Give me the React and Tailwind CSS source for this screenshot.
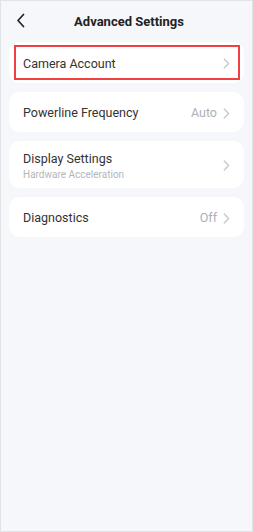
import React from "react";

const Chevron = () => (
  <svg width="7" height="11" viewBox="0 0 7 11" fill="none" className="shrink-0">
    <path d="M1.2 1 L5.6 5.5 L1.2 10" stroke="#c4c6ca" strokeWidth="1.2" strokeLinecap="round" strokeLinejoin="round" />
  </svg>
);

function Row({ title, sub, value, h, highlight }) {
  return (
    <div className={`relative flex items-center bg-white rounded-[11px] pl-[14px] pr-[14px] pt-[2px] ${h}`}>
      <div className="flex-1 flex flex-col">
        <span className="text-[12.5px] leading-[16px] text-[#333333]">{title}</span>
        {sub && <span className="text-[10px] leading-[13px] mt-[1px] text-[#b4b6ba]">{sub}</span>}
      </div>
      {value && <span className="text-[12.5px] text-[#aeb0b4] mr-[6px]">{value}</span>}
      <Chevron />
      {highlight && (
        <div className="absolute left-[5px] right-[4px] top-[3px] bottom-[3px] border-2 border-[#f04040]" />
      )}
    </div>
  );
}

export default function App() {
  return (
    <div
      className="w-[253px] h-[532px] bg-[#f5f7fa] border border-[#e1e3e6] flex flex-col"
      style={{ fontFamily: 'Roboto, "Noto Sans", sans-serif' }}
    >
      <div className="relative h-[41px] flex items-center justify-center">
        <svg width="10" height="15" viewBox="0 0 10 15" fill="none" className="absolute left-[15px] top-[12px]">
          <path d="M7.5 1.5 L2 7.5 L7.5 13.5" stroke="#222" strokeWidth="1.7" strokeLinecap="round" strokeLinejoin="round" />
        </svg>
        <span className="text-[13px] font-bold text-[#222] ml-[5px]">Advanced Settings</span>
      </div>
      <div className="flex flex-col gap-[9px] pl-[8px] pr-[8px]">
        <Row title="Camera Account" h="h-[41px]" highlight />
        <Row title="Powerline Frequency" value="Auto" h="h-[40px]" />
        <Row title="Display Settings" sub="Hardware Acceleration" h="h-[47px]" />
        <Row title="Diagnostics" value="Off" h="h-[40px]" />
      </div>
    </div>
  );
}
